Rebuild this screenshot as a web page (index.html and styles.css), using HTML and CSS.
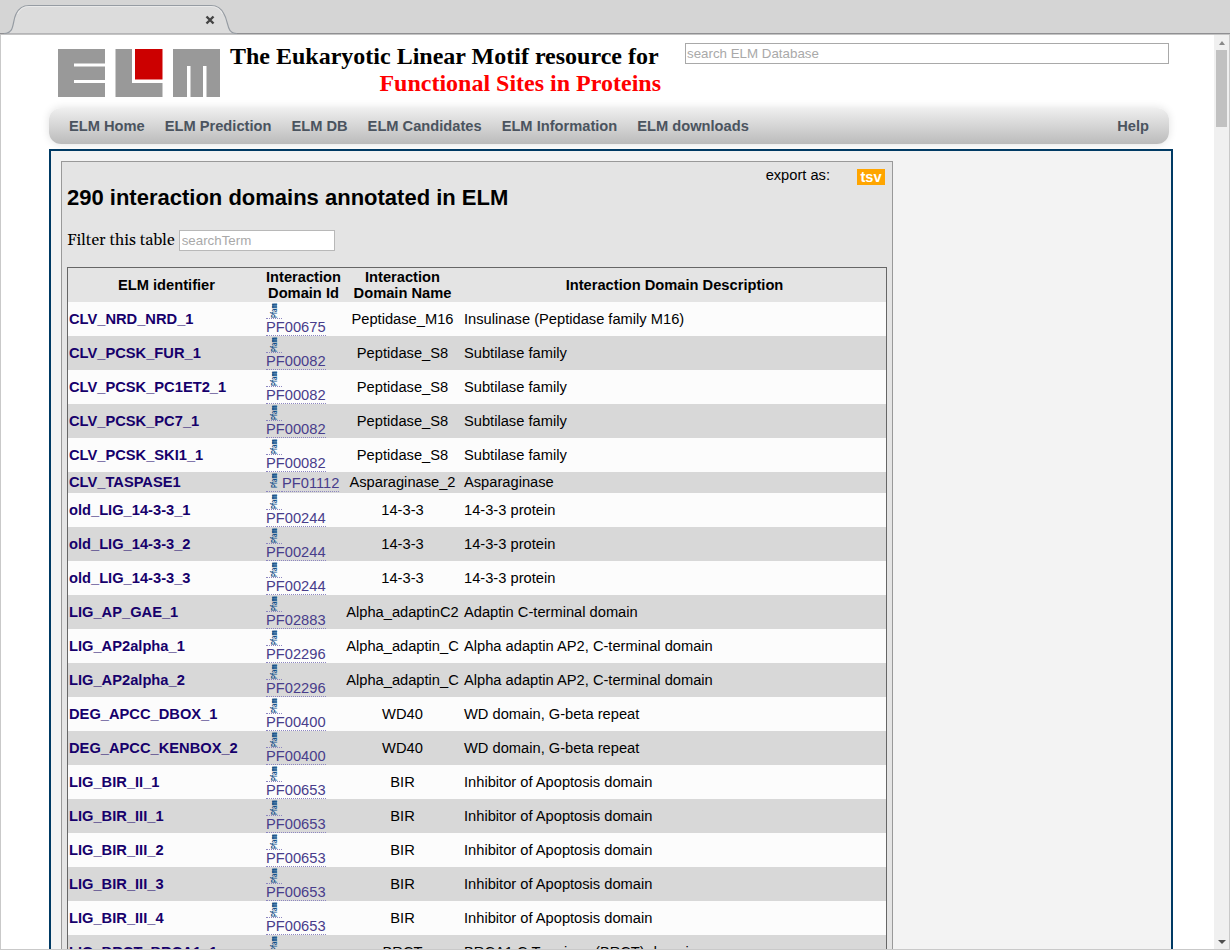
FILE: index.html
```html
<!DOCTYPE html>
<html lang="en">
<head>
<meta charset="utf-8">
<title>ELM - interaction domains</title>
<link rel="stylesheet" href="styles.css">
</head>
<body>
<div class="tabbar">
  <svg class="tab" width="250" height="34" viewBox="0 0 250 34"><path d="M4 33.500C15 33.500 12 22 16 14Q20 5.500 29 5.500H211Q220 5.500 224 14C229 22 226 33.500 237 33.500" fill="#dcdcdc" stroke="#969ca3" stroke-width="1.2"/><path d="M17.500 14Q21 6.500 29 6.500H211Q219 6.500 222.500 14" fill="none" stroke="#eee" stroke-width=".8"/><path d="M206.500 16.500l7 7m0-7l-7 7" stroke="#444" stroke-width="2.400"/></svg>
</div>
<div class="window">
  <main class="page">
    <header class="header">
      <svg class="logo" width="162" height="48" viewBox="0 0 162 48"><g fill="#999"><path d="M0 0H47V14.500H16V17.500H47V31H16V34H47V48H0Z"/><path d="M57.500 0H74V34H104.500V48H57.500Z"/><path d="M115 0H162V48H148.500V17H145V48H132.500V17H129V48H115Z"/></g><path d="M77 0H104.500V30.500H77Z" fill="#c00"/></svg>
      <div class="title"><div>The Eukaryotic Linear Motif resource for</div><div class="subtitle">Functional Sites in Proteins</div></div>
      <input class="search" placeholder="search ELM Database">
    </header>
    <nav class="nav"><a>ELM Home</a><a>ELM Prediction</a><a>ELM DB</a><a>ELM Candidates</a><a>ELM Information</a><a>ELM downloads</a><a class="help">Help</a></nav>
    <div class="content">
      <section class="panel">
        <div class="top"><h1>290 interaction domains annotated in ELM</h1><div class="export"><span>export as:</span><a class="tsv">tsv</a></div></div>
        <div class="filter"><label>Filter this table</label><input placeholder="searchTerm"></div>
        <table class="domains">
          <colgroup><col class="c1"><col class="c2"><col class="c3"><col class="c4"></colgroup>
          <thead><tr><th>ELM identifier</th><th>Interaction<br>Domain Id</th><th>Interaction<br>Domain Name</th><th>Interaction Domain Description</th></tr></thead>
          <tbody id="rows"></tbody>
        </table>
      </section>
    </div>
  </main>
  <div class="scrollbar"><i class="up"></i><i class="thumb"></i><i class="down"></i></div>
</div>
<script src="rows.js"></script>
</body>
</html>
```
FILE: styles.css
```css
* { box-sizing: border-box; }
html, body { margin: 0; height: 950px; overflow: hidden; }
body { font: 14.667px/16px "Liberation Sans", Arial, sans-serif; color: #000; background: #fff; }
.tabbar { height: 35px; background: #d5d5d5; border-bottom: 1px solid #c4c4c4; box-shadow: inset 0 -1px #8f8f92; }
.tab { display: block; }
.window { height: 915px; display: flex; border: 1px solid #c9c9c9; border-top: 0; }
.page { flex: 1; padding-left: 48px; overflow: hidden; }
.header { display: flex; height: 73px; }
.logo { margin: 14px 0 0 9px; flex: none; }
.title { width: 431px; margin: 8px 0 0 10px; font: bold 24px/27px "Liberation Serif", serif; white-space: nowrap; flex: none; }
.subtitle { color: #f00; text-align: right; }
.search { width: 484px; height: 21px; margin: 8px 0 0 24px; border: 1px solid #a9a9a9; padding: 1px; }
input { font: 13.333px "Liberation Sans", Arial, sans-serif; background: #fff; border-radius: 0; }
input::placeholder { color: #a9a9a9; opacity: 1; }
.nav { width: 1120px; height: 36px; display: flex; align-items: center; gap: 20px; padding: 0 20px; border-radius: 12px; background: linear-gradient(#efefef, #bbb); box-shadow: 0 0 8px rgba(0,0,0,.12); color: #4b545f; font-weight: bold; }
.help { margin-left: auto; }
.content { width: 1124px; height: 900px; margin-top: 5px; border: 2px solid #003a64; background: #f3f3f3; padding: 10px; }
.panel { width: 832px; height: 900px; background: #e4e4e4; border: 1px solid #999; padding: 0 5px; }
.top { display: flex; justify-content: space-between; height: 68px; }
h1 { margin: 23px 0 0; font-size: 22px; line-height: 26px; white-space: nowrap; }
.export { display: flex; gap: 27px; padding: 5px 2px 0 0; }
.tsv { margin-top: 2px; height: 16px; width: 28px; text-align: center; color: #fff; background: #ffa500; font-weight: bold; }
.filter { display: flex; align-items: flex-start; gap: 4px; height: 37px; font: 16px/20px Georgia, Gelasio, serif; }
.filter input { width: 156px; height: 21px; border: 1px solid #b8b8b8; padding: 1px 2px; }
.domains { width: 820px; table-layout: fixed; border: 1px solid #666; border-spacing: 0; font-size: 14.68px; line-height: 16px; }
.c1 { width: 197px; } .c2 { width: 77px; } .c3 { width: 121px; }
th, td { padding: 1px; height: 34px; vertical-align: middle; white-space: nowrap; }
.short td { height: 21px; padding: 1px 1px 3px; }
.short td:nth-child(2) { padding: 1px; }
tbody tr { background: #fcfcfc; }
tbody tr:nth-child(even) { background: #d8d8d8; }
.id { color: #16006b; font-weight: bold; }
.name { text-align: center; }
.pfam { display: flex; flex-wrap: wrap; height: 32px; color: #483d8b; align-content: flex-start; }
.mark { width: 16px; height: 16px; border-bottom: 1px dotted #8d86c0; }
.pf { height: 17px; line-height: 16px; border-bottom: 1px dotted #8d86c0; }
.mark svg { display: block; overflow: visible; }
.mark text { font: bold 9px "Liberation Sans", Arial, sans-serif; fill: #135089; }
.short .pfam { height: 19px; flex-wrap: nowrap; }
.short .mark, .short .pf { height: 19px; }
.short .pf { line-height: 20px; }
.scrollbar { width: 15px; background: #f0f0f0; display: flex; flex-direction: column; align-items: center; }
.up { margin-top: 6px; border: 3.500px solid transparent; border-top: 0; border-bottom: 4px solid #888; }
.thumb { width: 11px; height: 77px; margin-top: 5px; background: #c1c1c1; }
.down { margin: auto 0 5px; border: 4px solid transparent; border-bottom: 0; border-top: 4px solid #505050; }
```
FILE: rows.js
```js
const rows = [
  ["CLV_NRD_NRD_1", "PF00675", "Peptidase_M16", "Insulinase (Peptidase family M16)"],
  ["CLV_PCSK_FUR_1", "PF00082", "Peptidase_S8", "Subtilase family"],
  ["CLV_PCSK_PC1ET2_1", "PF00082", "Peptidase_S8", "Subtilase family"],
  ["CLV_PCSK_PC7_1", "PF00082", "Peptidase_S8", "Subtilase family"],
  ["CLV_PCSK_SKI1_1", "PF00082", "Peptidase_S8", "Subtilase family"],
  ["CLV_TASPASE1", "PF01112", "Asparaginase_2", "Asparaginase"],
  ["old_LIG_14-3-3_1", "PF00244", "14-3-3", "14-3-3 protein"],
  ["old_LIG_14-3-3_2", "PF00244", "14-3-3", "14-3-3 protein"],
  ["old_LIG_14-3-3_3", "PF00244", "14-3-3", "14-3-3 protein"],
  ["LIG_AP_GAE_1", "PF02883", "Alpha_adaptinC2", "Adaptin C-terminal domain"],
  ["LIG_AP2alpha_1", "PF02296", "Alpha_adaptin_C", "Alpha adaptin AP2, C-terminal domain"],
  ["LIG_AP2alpha_2", "PF02296", "Alpha_adaptin_C", "Alpha adaptin AP2, C-terminal domain"],
  ["DEG_APCC_DBOX_1", "PF00400", "WD40", "WD domain, G-beta repeat"],
  ["DEG_APCC_KENBOX_2", "PF00400", "WD40", "WD domain, G-beta repeat"],
  ["LIG_BIR_II_1", "PF00653", "BIR", "Inhibitor of Apoptosis domain"],
  ["LIG_BIR_III_1", "PF00653", "BIR", "Inhibitor of Apoptosis domain"],
  ["LIG_BIR_III_2", "PF00653", "BIR", "Inhibitor of Apoptosis domain"],
  ["LIG_BIR_III_3", "PF00653", "BIR", "Inhibitor of Apoptosis domain"],
  ["LIG_BIR_III_4", "PF00653", "BIR", "Inhibitor of Apoptosis domain"],
  ["LIG_BRCT_BRCA1_1", "PF00533", "BRCT", "BRCA1 C Terminus (BRCT) domain"]
];
// Small vertical Pfam mark drawn before every accession
const mark = '<svg width="16" height="15" viewBox="0 0 16 15"><path d="M6 .5H11V5H6Z" fill="#1a5a92" opacity=".65"/><text transform="translate(11 15) rotate(-90)" textLength="14.500" lengthAdjust="spacingAndGlyphs">Pfam</text></svg>';
document.getElementById("rows").innerHTML = rows.map(([id, pf, name, desc]) =>
  `<tr class="${pf === "PF01112" ? "short" : ""}"><td class="id">${id}</td><td><div class="pfam"><span class="mark">${mark}</span><span class="pf">${pf}</span></div></td><td class="name">${name}</td><td>${desc}</td></tr>`
).join("");
```
